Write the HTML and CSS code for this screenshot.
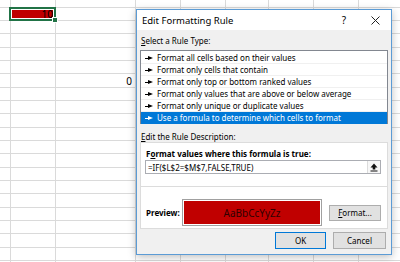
FILE: index.html
```html
<!DOCTYPE html>
<html lang="en">
<head>
    <meta charset="UTF-8">
    <title>Edit Formatting Rule</title>
    <link rel="stylesheet" href="styles.css">
</head>
<body>

    <div class="sheet">
        <div class="cell-selected">10</div>
        <div class="cell-zero">0</div>
    </div>

    <div class="dialog">
        <div class="dialog-title">
            <span class="title-text">Edit Formatting Rule</span>
            <span class="title-help">?</span>
            <span class="title-close">
                <svg width="9" height="9" viewBox="0 0 9 9"><path d="M0.5 0.5 L8.5 8.5 M8.5 0.5 L0.5 8.5" stroke="#222" stroke-width="1"/></svg>
            </span>
        </div>

        <div class="dialog-body">
            <div class="label"><u>S</u>elect a Rule Type:</div>
            <ul class="rule-list">
                <li><span class="rule-arrow"></span>Format all cells based on their values</li>
                <li><span class="rule-arrow"></span>Format only cells that contain</li>
                <li><span class="rule-arrow"></span>Format only top or bottom ranked values</li>
                <li><span class="rule-arrow"></span>Format only values that are above or below average</li>
                <li><span class="rule-arrow"></span>Format only unique or duplicate values</li>
                <li class="selected"><span class="rule-arrow"></span>Use a formula to determine which cells to format</li>
            </ul>

            <div class="label label-desc"><u>E</u>dit the Rule Description:</div>
            <div class="desc-box">
                <div class="desc-top">
                    <div class="desc-heading">F<u>o</u>rmat values where this formula is true:</div>
                    <div class="formula-input">
                        <span class="formula-text">=IF($L$2=$M$7,FALSE,TRUE)</span>
                        <span class="collapse-btn">
                            <svg width="8" height="9" viewBox="0 0 8 9"><path d="M4 0.5 L7.5 4.5 L5.3 4.5 L5.3 6.5 L2.7 6.5 L2.7 4.5 L0.5 4.5 Z" fill="#111"/><rect x="0.5" y="7.5" width="7" height="1" fill="#111"/></svg>
                        </span>
                    </div>
                </div>
                <div class="desc-bottom">
                    <span class="preview-label">Preview:</span>
                    <div class="preview-swatch">AaBbCcYyZz</div>
                    <span class="btn btn-format"><u>F</u>ormat...</span>
                </div>
            </div>

            <div class="dialog-actions">
                <span class="btn btn-default">OK</span>
                <span class="btn btn-cancel">Cancel</span>
            </div>
        </div>
    </div>

</body>
</html>
```

FILE: styles.css
```css
/* Excel sheet behind a Conditional Formatting dialog */
:root {
    --grid-line: #dadada;
    --excel-green: #217346;
    --cell-red: #c00000;
    --win-accent: #0078d7;
    --dialog-bg: #f0f0f0;
    --btn-bg: #e1e1e1;
    --btn-border: #adadad;
}

html, body {
    margin: 0;
    height: 100%;
    overflow: hidden;
}

body {
    font-family: 'Noto Sans', 'Open Sans', sans-serif;
    font-size: 8px;
    color: #000;
    background: #fff;
    position: relative;
}

/* spreadsheet: rows are 13/13/14px, column lines listed by hand */
.sheet {
    height: 100%;
    display: grid;
    grid-template-columns: 10px 45px 80px 45px 45px 43px 45px 45px 1fr;
    grid-template-rows: 7px repeat(7, 13px 13px 14px);
    background-image:
        linear-gradient(to right,
            transparent 10px, var(--grid-line) 10px, var(--grid-line) 11px,
            transparent 11px, transparent 55px, var(--grid-line) 55px, var(--grid-line) 56px,
            transparent 56px, transparent 135px, var(--grid-line) 135px, var(--grid-line) 136px,
            transparent 136px, transparent 180px, var(--grid-line) 180px, var(--grid-line) 181px,
            transparent 181px, transparent 225px, var(--grid-line) 225px, var(--grid-line) 226px,
            transparent 226px, transparent 268px, var(--grid-line) 268px, var(--grid-line) 269px,
            transparent 269px, transparent 313px, var(--grid-line) 313px, var(--grid-line) 314px,
            transparent 314px, transparent 358px, var(--grid-line) 358px, var(--grid-line) 359px,
            transparent 359px),
        repeating-linear-gradient(to bottom,
            var(--grid-line) 0 1px, transparent 1px 13px,
            var(--grid-line) 13px 14px, transparent 14px 26px,
            var(--grid-line) 26px 27px, transparent 27px 40px);
    background-position: 0 0, 0 7px;
}

.cell-selected {
    grid-column: 2;
    grid-row: 2;
    margin: 0 -1px -1px -1px;
    border: 2px solid var(--excel-green);
    outline: 1px solid #fff;
    outline-offset: -3px;
    background-color: var(--cell-red);
    padding-right: 1px;
    position: relative;
    font-family: 'Noto Sans', sans-serif;
    font-size: 10px;
    line-height: 10px;
    color: #000;
    text-align: right;
}

/* fill handle */
.cell-selected::after {
    content: '';
    position: absolute;
    right: -4px;
    bottom: -4px;
    width: 4px;
    height: 4px;
    background: var(--excel-green);
    border: 1px solid #fff;
}

.cell-zero {
    grid-column: 3;
    grid-row: 7;
    font-size: 10px;
    line-height: 12px;
    text-align: right;
    padding-right: 3px;
    align-self: end;
}

/* dialog window */
.dialog {
    position: absolute;
    left: 136px;
    top: 9px;
    width: 256px;
    height: 246px;
    box-sizing: border-box;
    border: 1px solid #5b9bd5;
    background: var(--dialog-bg);
    box-shadow: 0 2px 8px rgba(0, 0, 0, 0.25);
    display: flex;
    flex-direction: column;
}

.dialog-title {
    height: 20px;
    background: #fff;
    display: flex;
    align-items: center;
    padding-left: 5px;
    flex-shrink: 0;
}

.title-text {
    font-size: 9.5px;
    flex: 1;
}

.title-help {
    font-size: 10px;
    margin-right: 25px;
}

.title-close {
    display: flex;
    margin-right: 11px;
}

.dialog-body {
    padding: 5px 3px 0 3px;
}

.label {
    line-height: 11px;
    height: 11px;
    padding-left: 1px;
    margin-bottom: 4px;
}

.label-desc {
    margin: 7px 0 0 0;
}

.rule-list {
    list-style: none;
    margin: 0;
    padding: 1px 0 0 0;
    background: #fff;
    border: 1px solid #828790;
    border-bottom: none;
}

.rule-list li {
    height: 12px;
    line-height: 12px;
    display: flex;
    align-items: center;
    box-shadow: inset 0 -1px 0 #f0f0f0;
}

.rule-list li.selected {
    background: var(--win-accent);
    color: #fff;
    box-shadow: none;
}

.rule-arrow {
    width: 8px;
    height: 5px;
    margin: 0 4px 0 4px;
    position: relative;
}

.rule-arrow::before {
    content: '';
    position: absolute;
    left: 0;
    top: 2px;
    width: 4px;
    height: 1px;
    background: currentColor;
}

.rule-arrow::after {
    content: '';
    position: absolute;
    left: 3px;
    top: 0;
    border-left: 5px solid currentColor;
    border-top: 2.5px solid transparent;
    border-bottom: 2.5px solid transparent;
}

.desc-box {
    border: 1px solid #dcdcdc;
    background: #fff;
}

.desc-top {
    padding: 5px 6px 12px 4px;
    border-bottom: 1px solid #dcdcdc;
}

.desc-heading {
    font-weight: 700;
    line-height: 11px;
    padding-left: 1px;
    margin-bottom: 1px;
}

.formula-input {
    height: 14px;
    box-sizing: border-box;
    border: 1px solid #abadb3;
    display: flex;
    align-items: center;
    justify-content: space-between;
}

.formula-text {
    padding-left: 2px;
}

.collapse-btn {
    width: 13px;
    height: 12px;
    box-sizing: border-box;
    border-left: 1px solid #dcdcdc;
    background: #f7f7f7;
    display: flex;
    align-items: center;
    justify-content: center;
}

.desc-bottom {
    padding: 12px 6px 2px 5px;
    display: flex;
    align-items: center;
}

.preview-label {
    font-weight: 700;
    width: 36px;
}

.preview-swatch {
    width: 140px;
    height: 27px;
    box-sizing: border-box;
    border: 1px solid #a0a0a0;
    background: var(--cell-red);
    box-shadow: inset 0 0 0 1px #fff;
    color: #300000;
    font-size: 10px;
    display: flex;
    align-items: center;
    justify-content: center;
}

.btn {
    height: 16px;
    box-sizing: border-box;
    border: 1px solid var(--btn-border);
    background: var(--btn-bg);
    display: flex;
    align-items: center;
    justify-content: center;
}

.btn-format {
    width: 52px;
    margin-left: 7px;
}

.dialog-actions {
    display: flex;
    justify-content: flex-end;
    gap: 7px;
    margin: 3px 2px 0 0;
}

.btn-default,
.btn-cancel {
    height: 17px;
}

.btn-default {
    width: 51px;
    border-color: var(--win-accent);
}

.btn-cancel {
    width: 53px;
}
```
